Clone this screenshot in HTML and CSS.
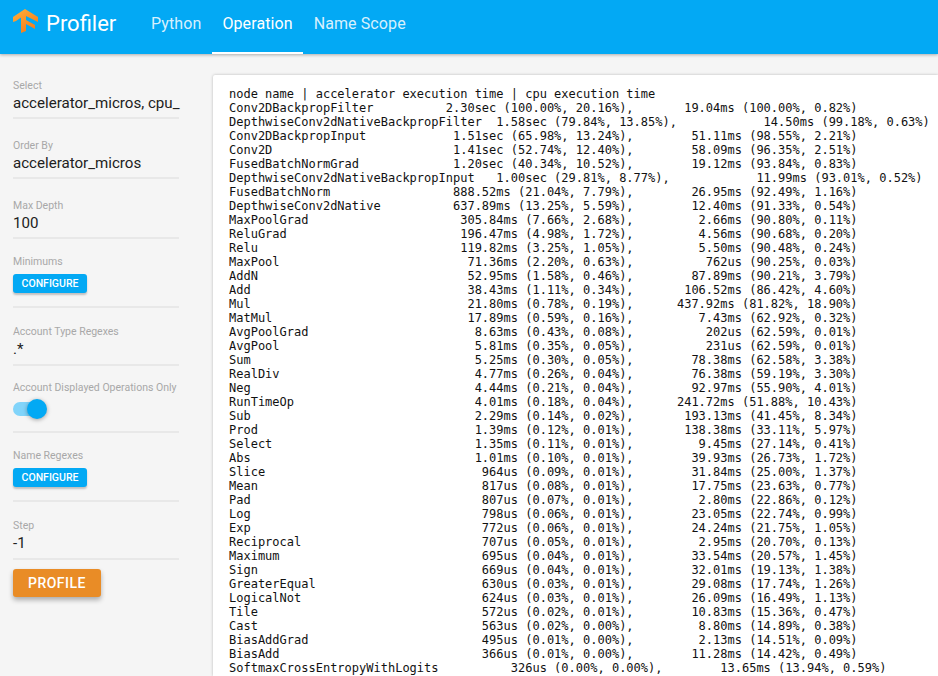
FILE: index.html
```html
<!DOCTYPE html>
<html lang="en">
<head>
<meta charset="utf-8">
<title>Profiler</title>
<link rel="stylesheet" href="styles.css">
</head>
<body>
<header class="toolbar">
  <svg class="logo" width="26" height="26" viewBox="0 0 26 26" aria-hidden="true">
    <defs>
      <linearGradient id="tf" x1="0" y1="0" x2="0.6" y2="1">
        <stop offset="0" stop-color="#ffb13b"/>
        <stop offset="1" stop-color="#f47c1c"/>
      </linearGradient>
    </defs>
    <path fill="url(#tf)" d="M0 9 12 1 25 9V14L13 8V12L22 17V21L13 16V23L8 25V9.500L3 13 0 14Z"/>
  </svg>
  <div class="title">Profiler</div>
  <nav class="tabs">
    <a class="tab">Python</a>
    <a class="tab active">Operation</a>
    <a class="tab">Name Scope</a>
  </nav>
</header>
<main class="content">
  <aside class="sidebar">
    <div class="field text-field first">
      <label class="label">Select</label>
      <div class="value">accelerator_micros, cpu_</div>
    </div>
    <div class="field text-field">
      <label class="label">Order By</label>
      <div class="value">accelerator_micros</div>
    </div>
    <div class="field text-field">
      <label class="label">Max Depth</label>
      <div class="value">100</div>
    </div>
    <div class="field action">
      <label class="label">Minimums</label>
      <button class="btn">Configure</button>
    </div>
    <div class="field regex">
      <label class="label">Account Type Regexes</label>
      <div class="value">.*</div>
    </div>
    <div class="field toggle-field">
      <label class="label">Account Displayed Operations Only</label>
      <div class="toggle"><span class="track"></span><span class="knob"></span></div>
    </div>
    <div class="field action">
      <label class="label">Name Regexes</label>
      <button class="btn">Configure</button>
    </div>
    <div class="field step">
      <label class="label">Step</label>
      <div class="value">-1</div>
    </div>
    <button class="profile">Profile</button>
  </aside>
  <section class="card">
<pre class="output">node name | accelerator execution time | cpu execution time
Conv2DBackpropFilter          2.30sec (100.00%, 20.16%),       19.04ms (100.00%, 0.82%)
DepthwiseConv2dNativeBackpropFilter  1.58sec (79.84%, 13.85%),            14.50ms (99.18%, 0.63%)
Conv2DBackpropInput            1.51sec (65.98%, 13.24%),        51.11ms (98.55%, 2.21%)
Conv2D                         1.41sec (52.74%, 12.40%),        58.09ms (96.35%, 2.51%)
FusedBatchNormGrad             1.20sec (40.34%, 10.52%),        19.12ms (93.84%, 0.83%)
DepthwiseConv2dNativeBackpropInput   1.00sec (29.81%, 8.77%),            11.99ms (93.01%, 0.52%)
FusedBatchNorm                 888.52ms (21.04%, 7.79%),        26.95ms (92.49%, 1.16%)
DepthwiseConv2dNative          637.89ms (13.25%, 5.59%),        12.40ms (91.33%, 0.54%)
MaxPoolGrad                     305.84ms (7.66%, 2.68%),         2.66ms (90.80%, 0.11%)
ReluGrad                        196.47ms (4.98%, 1.72%),         4.56ms (90.68%, 0.20%)
Relu                            119.82ms (3.25%, 1.05%),         5.50ms (90.48%, 0.24%)
MaxPool                          71.36ms (2.20%, 0.63%),          762us (90.25%, 0.03%)
AddN                             52.95ms (1.58%, 0.46%),        87.89ms (90.21%, 3.79%)
Add                              38.43ms (1.11%, 0.34%),       106.52ms (86.42%, 4.60%)
Mul                              21.80ms (0.78%, 0.19%),      437.92ms (81.82%, 18.90%)
MatMul                           17.89ms (0.59%, 0.16%),         7.43ms (62.92%, 0.32%)
AvgPoolGrad                       8.63ms (0.43%, 0.08%),          202us (62.59%, 0.01%)
AvgPool                           5.81ms (0.35%, 0.05%),          231us (62.59%, 0.01%)
Sum                               5.25ms (0.30%, 0.05%),        78.38ms (62.58%, 3.38%)
RealDiv                           4.77ms (0.26%, 0.04%),        76.38ms (59.19%, 3.30%)
Neg                               4.44ms (0.21%, 0.04%),        92.97ms (55.90%, 4.01%)
RunTimeOp                         4.01ms (0.18%, 0.04%),      241.72ms (51.88%, 10.43%)
Sub                               2.29ms (0.14%, 0.02%),       193.13ms (41.45%, 8.34%)
Prod                              1.39ms (0.12%, 0.01%),       138.38ms (33.11%, 5.97%)
Select                            1.35ms (0.11%, 0.01%),         9.45ms (27.14%, 0.41%)
Abs                               1.01ms (0.10%, 0.01%),        39.93ms (26.73%, 1.72%)
Slice                              964us (0.09%, 0.01%),        31.84ms (25.00%, 1.37%)
Mean                               817us (0.08%, 0.01%),        17.75ms (23.63%, 0.77%)
Pad                                807us (0.07%, 0.01%),         2.80ms (22.86%, 0.12%)
Log                                798us (0.06%, 0.01%),        23.05ms (22.74%, 0.99%)
Exp                                772us (0.06%, 0.01%),        24.24ms (21.75%, 1.05%)
Reciprocal                         707us (0.05%, 0.01%),         2.95ms (20.70%, 0.13%)
Maximum                            695us (0.04%, 0.01%),        33.54ms (20.57%, 1.45%)
Sign                               669us (0.04%, 0.01%),        32.01ms (19.13%, 1.38%)
GreaterEqual                       630us (0.03%, 0.01%),        29.08ms (17.74%, 1.26%)
LogicalNot                         624us (0.03%, 0.01%),        26.09ms (16.49%, 1.13%)
Tile                               572us (0.02%, 0.01%),        10.83ms (15.36%, 0.47%)
Cast                               563us (0.02%, 0.00%),         8.80ms (14.89%, 0.38%)
BiasAddGrad                        495us (0.01%, 0.00%),         2.13ms (14.51%, 0.09%)
BiasAdd                            366us (0.01%, 0.00%),        11.28ms (14.42%, 0.49%)
SoftmaxCrossEntropyWithLogits          326us (0.00%, 0.00%),        13.65ms (13.94%, 0.59%)</pre>
  </section>
</main>
</body>
</html>
```
FILE: styles.css
```css
* { box-sizing: border-box; }
html, body { margin: 0; height: 100%; overflow: hidden; }
body {
  display: flex;
  flex-direction: column;
  background: #f5f5f5;
  font-family: Roboto, sans-serif;
  color: #212121;
}
.toolbar {
  flex: none;
  height: 54px;
  display: flex;
  align-items: stretch;
  background: #03a9f4;
  box-shadow: 0 1px 3px rgba(0,0,0,.3);
  color: #fff;
  position: relative;
}
.logo { margin: 8px 7px 0 13px; flex: none; }
.title { font-size: 22px; line-height: 47px; width: 95px; }
.tabs { display: flex; gap: 1px; }
.tab {
  padding: 0 10px;
  font-size: 16px;
  letter-spacing: .1px;
  line-height: 48px;
  color: rgba(255,255,255,.85);
  border-bottom: 2px solid transparent;
  height: 54px;
}
.tab.active { color: #fff; border-bottom-color: #fff; }
.content { flex: 1; display: flex; min-height: 0; }
.sidebar { flex: none; width: 213px; padding: 24px 34px 0 13px; }
.field { border-bottom: 2px solid #e8e8e8; }
.text-field { height: 41px; margin-bottom: 19px; }
.label {
  display: block;
  font-size: 10.5px;
  line-height: 14px;
  padding-top: 1px;
  color: #a8a8a8;
  white-space: nowrap;
}
.value { font-size: 15.1px; line-height: 22px; margin-top: -1px; white-space: nowrap; }
.text-field:nth-child(3) { margin-bottom: 15px; }
.action { height: 54px; margin-bottom: 16px; }
.btn {
  display: block;
  width: 74px;
  height: 19px;
  margin-top: 5px;
  padding: 0;
  border: 0;
  border-radius: 3px;
  background: #03a9f4;
  color: #fff;
  font: 500 10.5px/19px Roboto, sans-serif;
  text-transform: uppercase;
  box-shadow: 0 2px 2px rgba(0,0,0,.22);
}
.regex { height: 42px; margin-bottom: 14px; }
.toggle-field { height: 53px; margin-bottom: 15px; }
.toggle { position: relative; height: 20px; margin-top: 4px; }
.track {
  position: absolute;
  left: 0;
  top: 3px;
  width: 32px;
  height: 14px;
  border-radius: 7px;
  background: #81d4fa;
}
.knob {
  position: absolute;
  left: 14px;
  top: 0;
  width: 20px;
  height: 20px;
  border-radius: 50%;
  background: #03a9f4;
  box-shadow: 0 1px 4px rgba(0,0,0,.35);
}
.step { height: 42px; margin-bottom: 9px; }
.profile {
  display: block;
  width: 88px;
  height: 28px;
  padding: 0;
  border: 0;
  border-radius: 3px;
  background: #e98c26;
  color: #fff;
  font: 500 14px/28px Roboto, sans-serif;
  letter-spacing: .5px;
  text-transform: uppercase;
  box-shadow: 0 3px 5px rgba(0,0,0,.3);
}
.card {
  flex: 1;
  margin-top: 21px;
  min-width: 0;
  background: #fff;
  box-shadow: 0 0 3px rgba(0,0,0,.25);
  border-radius: 2px 0 0 0;
  padding: 12px 0 0 16px;
  overflow: hidden;
}
.output {
  margin: 0;
  font: 12px/14px "DejaVu Sans Mono", monospace;
  color: #111;
}
```
